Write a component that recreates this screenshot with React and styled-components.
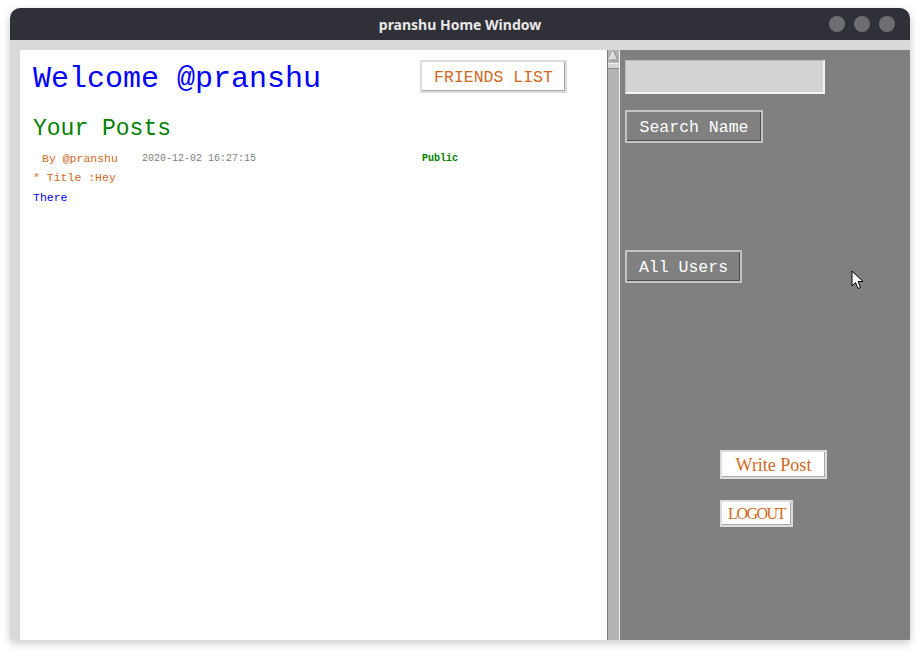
import styled, { createGlobalStyle } from "styled-components";

const Global = createGlobalStyle`
	html, body {
		margin: 0;
		padding: 0;
		background: #ffffff;
	}
	body {
		width: 920px;
		height: 651px;
		overflow: hidden;
	}
`;

const Window = styled.div`
	margin: 8px 10px 0;
	width: 900px;
	border-radius: 10px 10px 0 0;
	box-shadow: 0 3px 9px rgba(0, 0, 0, 0.22);
	overflow: hidden;
`;

const TitleBar = styled.div`
	height: 32px;
	background: #303038;
	display: flex;
	align-items: center;
	justify-content: center;
	position: relative;
	h1 {
		margin: 0;
		font-family: "Noto Sans", "Open Sans", sans-serif;
		font-weight: 700;
		font-size: 14px;
		color: #e8e8e8;
	}
`;

const Dots = styled.div`
	position: absolute;
	right: 15px;
	top: 8px;
	display: flex;
	gap: 9px;
	span {
		width: 16px;
		height: 16px;
		border-radius: 50%;
		background: #6d6d72;
	}
`;

const Body = styled.div`
	background: #d9d9d9;
	padding: 10px 0 0 10px;
	display: flex;
	height: 590px;
`;

const LeftPanel = styled.div`
	width: 587px;
	background: #ffffff;
	padding: 10px 0 0 13px;
	box-sizing: border-box;
	font-family: "Liberation Mono", "DejaVu Sans Mono", monospace;
`;

const Header = styled.div`
	display: flex;
	justify-content: space-between;
	align-items: center;
	padding-right: 40px;
	height: 33px;
	h2 {
		margin: 0;
		font-weight: 400;
		font-size: 30px;
		line-height: 33px;
		color: #0000ff;
		padding-top: 6px;
	}
`;

const RaisedButton = styled.button`
	box-sizing: border-box;
	width: ${(p) => p.$w}px;
	height: ${(p) => p.$h}px;
	margin: ${(p) => p.$m || 0};
	padding: 1px 0 0;
	background: ${(p) => (p.$dark ? "#808080" : "#ffffff")};
	color: ${(p) => (p.$dark ? "#ffffff" : "#d2691e")};
	font-family: ${(p) =>
		p.$serif ? '"Liberation Serif", serif' : '"Liberation Mono", monospace'};
	font-size: ${(p) => p.$fs}px;
	letter-spacing: ${(p) => p.$ls || 0}px;
	border: 2px solid ${(p) => (p.$dark ? "#c4c4c4" : "#dcdcdc")};
	box-shadow: inset -1px -1px 0 ${(p) => (p.$dark ? "#4e4e4e" : "#a8a8a8")};
	display: flex;
	align-items: center;
	justify-content: center;
`;

const SectionTitle = styled.h3`
	margin: 21px 0 0;
	font-weight: 400;
	font-size: 23px;
	line-height: 30px;
	color: #008000;
`;

const MetaRow = styled.div`
	margin-top: 4px;
	display: grid;
	grid-template-columns: 100px 280px auto;
	padding-left: 9px;
	height: 20px;
	align-items: center;
`;

const Meta = styled.span`
	font-size: ${(p) => p.$fs}px;
	color: ${(p) => p.$c};
	font-weight: ${(p) => (p.$bold ? 700 : 400)};
`;

const Line = styled.div`
	font-size: 11.5px;
	line-height: 20px;
	color: ${(p) => p.$c};
`;

const Scrollbar = styled.div`
	width: 11px;
	background: #b3b3b3;
	border-left: 1px solid #7c7c7c;
	display: flex;
	flex-direction: column;
	align-items: center;
	svg {
		display: block;
	}
`;

const Thumb = styled.div`
	margin-top: 2px;
	width: 11px;
	height: 4px;
	background: #d6d6d6;
	border-top: 1px solid #f2f2f2;
	border-bottom: 1px solid #8c8c8c;
`;

const RightPanel = styled.div`
	position: relative;
	width: 291px;
	background: #808080;
	border-left: 1px solid #f2f2f2;
	padding: 10px 0 0 5px;
	box-sizing: border-box;
	display: flex;
	flex-direction: column;
	align-items: flex-start;
`;

const Entry = styled.input`
	box-sizing: border-box;
	width: 200px;
	height: 34px;
	margin: 0;
	background: #d3d3d3;
	border-style: solid;
	border-width: 1px 2px 2px 1px;
	border-color: #bdbdbd #f4f4f4 #f4f4f4 #bdbdbd;
	outline: none;
`;

const Cursor = styled.svg`
	position: absolute;
	left: 231px;
	top: 220px;
`;

const App = () => {
	return (
		<>
			<Global />
			<Window>
				<TitleBar>
					<h1>pranshu Home Window</h1>
					<Dots>
						<span />
						<span />
						<span />
					</Dots>
				</TitleBar>
				<Body>
					<LeftPanel>
						<Header>
							<h2>Welcome @pranshu</h2>
							<RaisedButton $w={147} $h={33} $fs={16.5}>
								FRIENDS LIST
							</RaisedButton>
						</Header>
						<SectionTitle>Your Posts</SectionTitle>
						<MetaRow>
							<Meta $fs={11.5} $c="#d2691e">
								By @pranshu
							</Meta>
							<Meta $fs={10} $c="#7f7f7f">
								2020-12-02 16:27:15
							</Meta>
							<Meta $fs={10} $c="#008000" $bold>
								Public
							</Meta>
						</MetaRow>
						<Line $c="#d2691e">* Title :Hey</Line>
						<Line $c="#0000ff">There</Line>
					</LeftPanel>
					<Scrollbar>
						<svg width="11" height="11" viewBox="0 0 11 11">
							<polygon points="5.5,1 10,10 1,10" fill="#d9d9d9" />
							<polyline points="1,10 5.5,1" stroke="#ffffff" fill="none" />
							<polyline points="5.5,1 10,10 1,10" stroke="#8a8a8a" fill="none" />
						</svg>
						<Thumb />
					</Scrollbar>
					<RightPanel>
						<Entry />
						<RaisedButton $dark $w={138} $h={33} $fs={16.5} $m="16px 0 0">
							Search Name
						</RaisedButton>
						<RaisedButton $dark $w={117} $h={33} $fs={16.5} $m="107px 0 0">
							All Users
						</RaisedButton>
						<RaisedButton $serif $w={107} $h={29} $fs={18} $m="167px 0 0 95px">
							Write Post
						</RaisedButton>
						<RaisedButton $serif $w={73} $h={27} $fs={16} $ls={-1.5} $m="21px 0 0 95px">
							LOGOUT
						</RaisedButton>
						<Cursor width="13" height="20" viewBox="0 0 13 20">
							<path
								d="M1 1 L1 16 L4.5 12.5 L7 18.5 L9.5 17.5 L7 11.5 L12 11.5 Z"
								fill="#ffffff"
								stroke="#000000"
								strokeWidth="1"
								strokeLinejoin="round"
							/>
						</Cursor>
					</RightPanel>
				</Body>
			</Window>
		</>
	);
};

export default App;
